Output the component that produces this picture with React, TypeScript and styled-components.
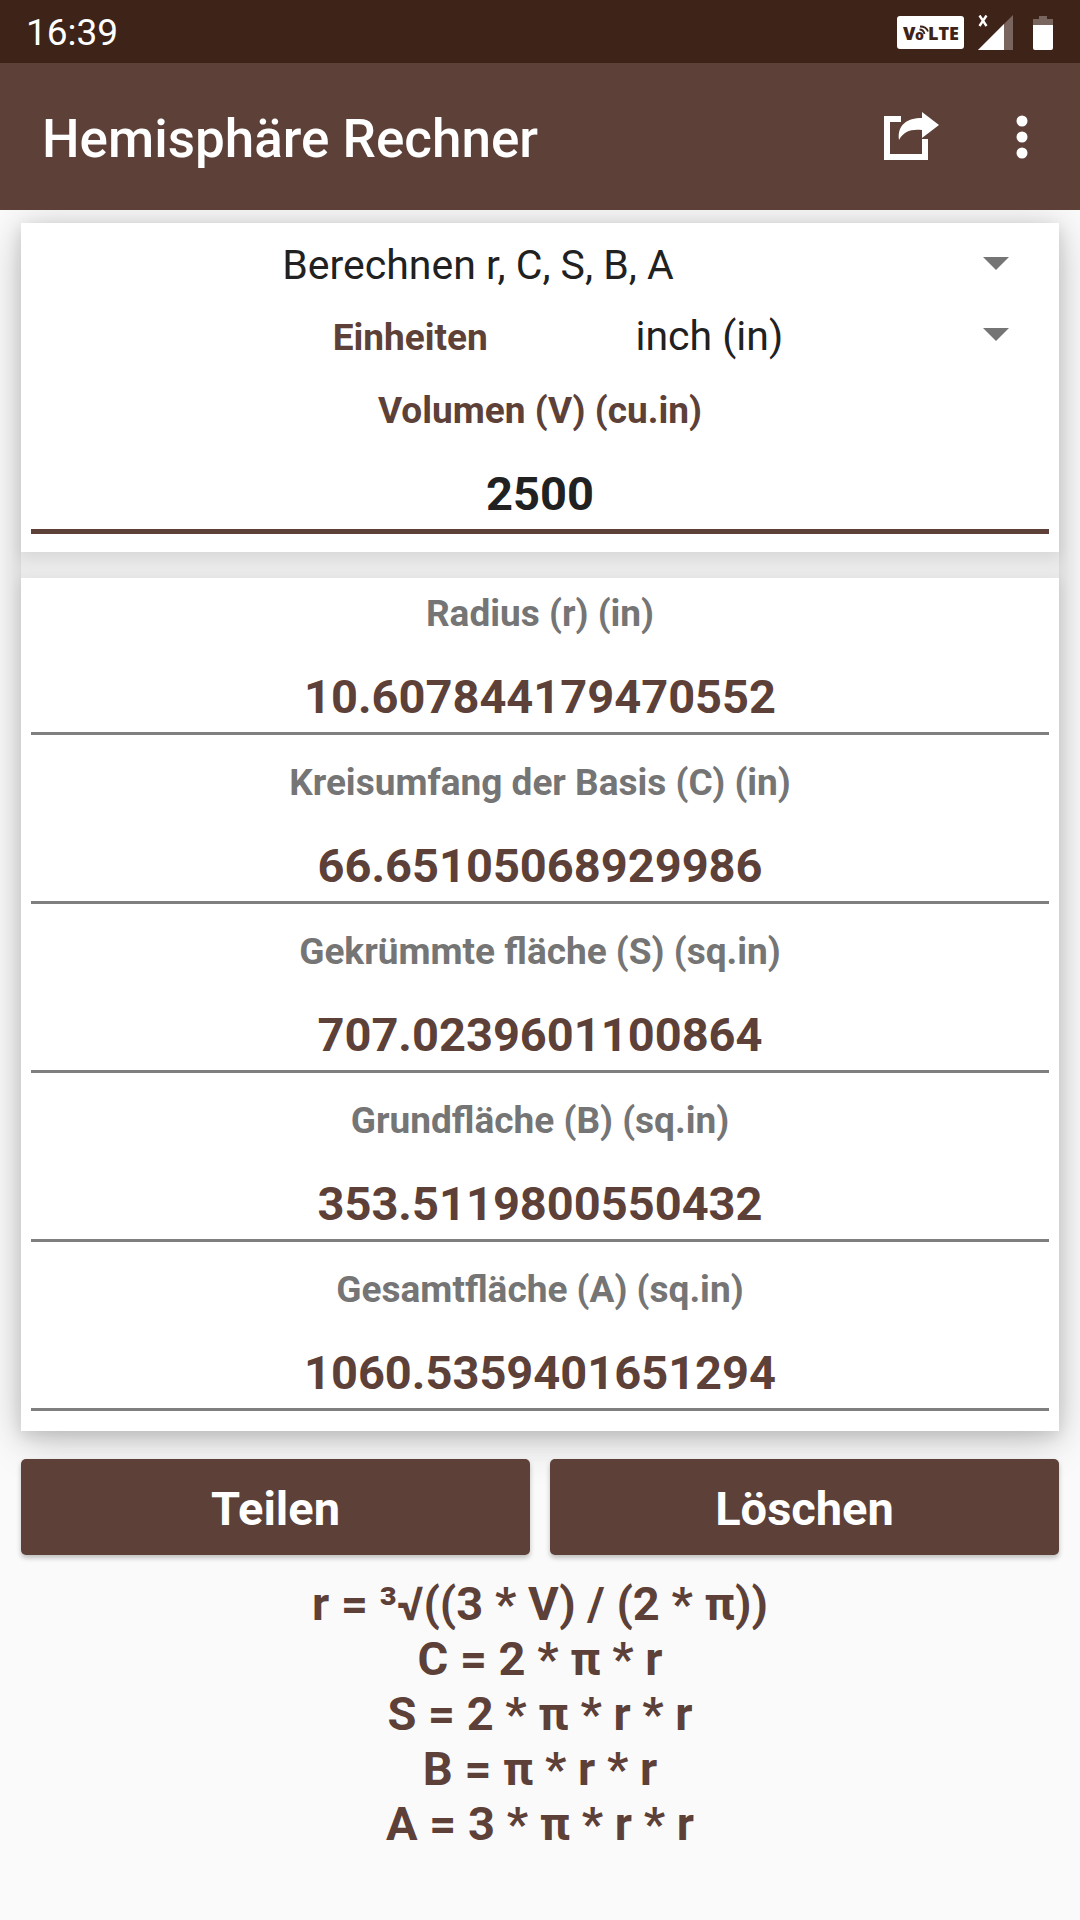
import React, { useState } from "react";
import styled, { createGlobalStyle } from "styled-components";

const color = {
  primary: "#5d4037",
  primaryDark: "#3e2319",
  page: "#fafafa",
  ink: "#212121",
  muted: "#757575",
};

const GlobalStyle = createGlobalStyle`
  * { box-sizing: border-box; }
  body {
    margin: 0;
    background: ${color.page};
    font-family: Roboto, "Liberation Sans", sans-serif;
  }
  #root { min-height: 100vh; }
`;

const Screen = styled.div`
  display: flex;
  flex-direction: column;
  min-height: 100vh;
`;

const StatusBar = styled.div`
  position: relative;
  z-index: 2;
  display: flex;
  align-items: center;
  justify-content: space-between;
  height: 63px;
  padding: 2px 27px 0 26px;
  background: ${color.primaryDark};
  color: #fff;
  font-size: 37px;
  line-height: 44px;
`;

const StatusIcons = styled.div`
  display: flex;
  align-items: center;
`;

const SignalIcon = styled.svg`
  margin: 0 20px 0 14px;
`;

const Toolbar = styled.header`
  position: relative;
  z-index: 2;
  display: flex;
  align-items: center;
  gap: 36px;
  height: 147px;
  padding: 0 32px 0 42px;
  background: ${color.primary};
  color: #fff;
`;

const Title = styled.h1`
  flex: 1;
  margin: 0;
  padding-top: 4px;
  font-size: 53px;
  line-height: 62px;
  font-weight: 500;
`;

const IconButton = styled.button`
  display: flex;
  align-items: center;
  justify-content: center;
  height: 96px;
  padding: 0 20px;
  border: 0;
  background: none;
  color: inherit;
`;

const Content = styled.main`
  display: flex;
  flex-direction: column;
  padding: 13px 21px;
`;

const CardStack = styled.div`
  display: flex;
  flex-direction: column;
  gap: 26px;
  background: #eaeaea;
  box-shadow: 0 14px 40px rgba(0, 0, 0, 0.14), 0 0 32px rgba(0, 0, 0, 0.12);
`;

const Card = styled.section`
  position: relative;
  z-index: 1;
  display: flex;
  flex-direction: column;
  padding: 6px 10px 18px;
  background: #fff;
  box-shadow: 0 5px 14px rgba(0, 0, 0, 0.09);
`;

const ResultCard = styled(Card)`
  z-index: 0;
  gap: 26px;
  padding: 14px 10px 20px;
`;

const Row = styled.div`
  display: grid;
  grid-template-columns: 5fr 6fr;
  align-items: baseline;
`;

const Label = styled.label<{ $muted?: boolean }>`
  font-size: 37px;
  line-height: 43px;
  font-weight: 700;
  text-align: center;
  color: ${(p) => (p.$muted ? color.muted : color.primary)};
`;

const RowLabel = styled(Label)`
  padding-right: 6px;
  text-align: right;
`;

const SelectBox = styled.div`
  position: relative;
  display: block;
`;

const Select = styled.select`
  display: block;
  width: 100%;
  height: 71px;
  padding: 0 124px 0 0;
  border: 0;
  background: none;
  appearance: none;
  color: ${color.ink};
  font: 400 41px Roboto, "Liberation Sans", sans-serif;
  text-align: center;
  text-align-last: center;
`;

const Arrow = styled.svg`
  position: absolute;
  right: 40px;
  top: 28px;
  pointer-events: none;
`;

const Field = styled.div<{ $first?: boolean }>`
  display: flex;
  flex-direction: column;
  gap: 34px;
  padding-top: ${(p) => (p.$first ? "18px" : "0")};
`;

const Value = styled.input<{ $active?: boolean }>`
  width: 100%;
  height: ${(p) => (p.$active ? "68px" : "66px")};
  padding: 0 0 8px;
  border: 0;
  border-bottom: ${(p) => (p.$active ? `5px solid ${color.primary}` : "3px solid #7f7f7f")};
  border-radius: 0;
  outline: 0;
  background: none;
  color: ${(p) => (p.$active ? color.ink : color.primary)};
  font: 700 47px/55px Roboto, "Liberation Sans", sans-serif;
  text-align: center;
`;

const Actions = styled.div`
  display: flex;
  gap: 20px;
  margin-top: 28px;
`;

const Action = styled.button`
  position: relative;
  flex: 1;
  padding: 22px 0 19px;
  border: 0;
  border-radius: 5px;
  background: ${color.primary};
  color: #fff;
  font: 700 47px/55px Roboto, "Liberation Sans", sans-serif;
  box-shadow: 0 3px 5px rgba(0, 0, 0, 0.24);
`;

const Formulas = styled.div`
  margin-top: 21px;
  color: ${color.primary};
  font-size: 47px;
  line-height: 55px;
  font-weight: 700;
  text-align: center;
`;

const Formula = styled.p`
  margin: 0;
`;

const results = [
  { id: "r", label: "Radius (r) (in)", value: "10.607844179470552" },
  { id: "c", label: "Kreisumfang der Basis (C) (in)", value: "66.65105068929986" },
  { id: "s", label: "Gekrümmte fläche (S) (sq.in)", value: "707.0239601100864" },
  { id: "b", label: "Grundfläche (B) (sq.in)", value: "353.5119800550432" },
  { id: "a", label: "Gesamtfläche (A) (sq.in)", value: "1060.5359401651294" },
];

const formulas = [
  "r = ³√((3 * V) / (2 * π))",
  "C = 2 * π * r",
  "S = 2 * π * r * r",
  "B = π * r * r",
  "A = 3 * π * r * r",
];

function DropArrow() {
  return (
    <Arrow width="26" height="13" viewBox="0 0 26 13" aria-hidden="true">
      <path d="M0 0h26L13 13z" fill={color.muted} />
    </Arrow>
  );
}

export default function App() {
  const [volume, setVolume] = useState("2500");

  return (
    <>
      <GlobalStyle />
      <Screen>
        <StatusBar>
          <span>16:39</span>
          <StatusIcons>
            <svg width="67" height="33" viewBox="0 0 67 33" aria-hidden="true">
              <rect width="67" height="33" rx="3" fill="#fff" />
              <g
                fill={color.primaryDark}
                fontFamily="Open Sans, sans-serif"
                fontWeight="800"
              >
                <text x="6" y="24" fontSize="18">V</text>
                <text x="18" y="24" fontSize="14">o</text>
                <text x="31" y="24" fontSize="18">LTE</text>
              </g>
              <g fill="none" stroke={color.primaryDark} strokeWidth="1.800">
                <path d="M22.500 13.500q4 0 5 4.500M23 10.500q6.500 0 8 5" />
              </g>
            </svg>
            <SignalIcon width="35" height="35" viewBox="0 0 35 35" aria-hidden="true">
              <path d="M35 0v35H0z" fill="#7a655e" />
              <path d="M26 9v26H0z" fill="#fff" />
              <path d="M1.500 0.500l7 10.500M8.500 0.500l-7 10.500" stroke="#fff" strokeWidth="2.400" />
            </SignalIcon>
            <svg width="20" height="34" viewBox="0 0 20 34" aria-hidden="true">
              <path d="M6 0h8v3h6v6H0V3h6z" fill="#7a655e" />
              <path d="M0 9h20v23q0 2-2 2H2q-2 0-2-2z" fill="#fff" />
            </svg>
          </StatusIcons>
        </StatusBar>

        <Toolbar>
          <Title>Hemisphäre Rechner</Title>
          <IconButton type="button" aria-label="Teilen">
            <svg width="57" height="50" viewBox="0 0 57 50" aria-hidden="true">
              <path d="M18 7H4v38h38V27" fill="none" stroke="#fff" strokeWidth="6" />
              <path d="M39 0l17 13-17 13v-8C28 17 21 19 16 28 14 13 24 6 39 6z" fill="#fff" />
            </svg>
          </IconButton>
          <IconButton type="button" aria-label="Mehr">
            <svg width="12" height="44" viewBox="0 0 12 44" aria-hidden="true" fill="#fff">
              <circle cx="6" cy="6" r="5.500" />
              <circle cx="6" cy="22" r="5.500" />
              <circle cx="6" cy="38" r="5.500" />
            </svg>
          </IconButton>
        </Toolbar>

        <Content>
          <CardStack>
            <Card>
              <SelectBox>
                <Select aria-label="Berechnung" defaultValue="rcsba">
                  <option value="rcsba">Berechnen r, C, S, B, A</option>
                </Select>
                <DropArrow />
              </SelectBox>
              <Row>
                <RowLabel htmlFor="unit">Einheiten</RowLabel>
                <SelectBox>
                  <Select id="unit" defaultValue="in">
                    <option value="in">inch (in)</option>
                  </Select>
                  <DropArrow />
                </SelectBox>
              </Row>
              <Field $first>
                <Label htmlFor="volume">Volumen (V) (cu.in)</Label>
                <Value
                  id="volume"
                  $active
                  value={volume}
                  onChange={(e) => setVolume(e.target.value)}
                />
              </Field>
            </Card>

            <ResultCard>
              {results.map((r) => (
                <Field key={r.id}>
                  <Label htmlFor={r.id} $muted>{r.label}</Label>
                  <Value id={r.id} value={volume ? r.value : ""} readOnly />
                </Field>
              ))}
            </ResultCard>
          </CardStack>

          <Actions>
            <Action type="button">Teilen</Action>
            <Action type="button" onClick={() => setVolume("")}>Löschen</Action>
          </Actions>

          <Formulas>
            {formulas.map((f) => (
              <Formula key={f}>{f}</Formula>
            ))}
          </Formulas>
        </Content>
      </Screen>
    </>
  );
}
